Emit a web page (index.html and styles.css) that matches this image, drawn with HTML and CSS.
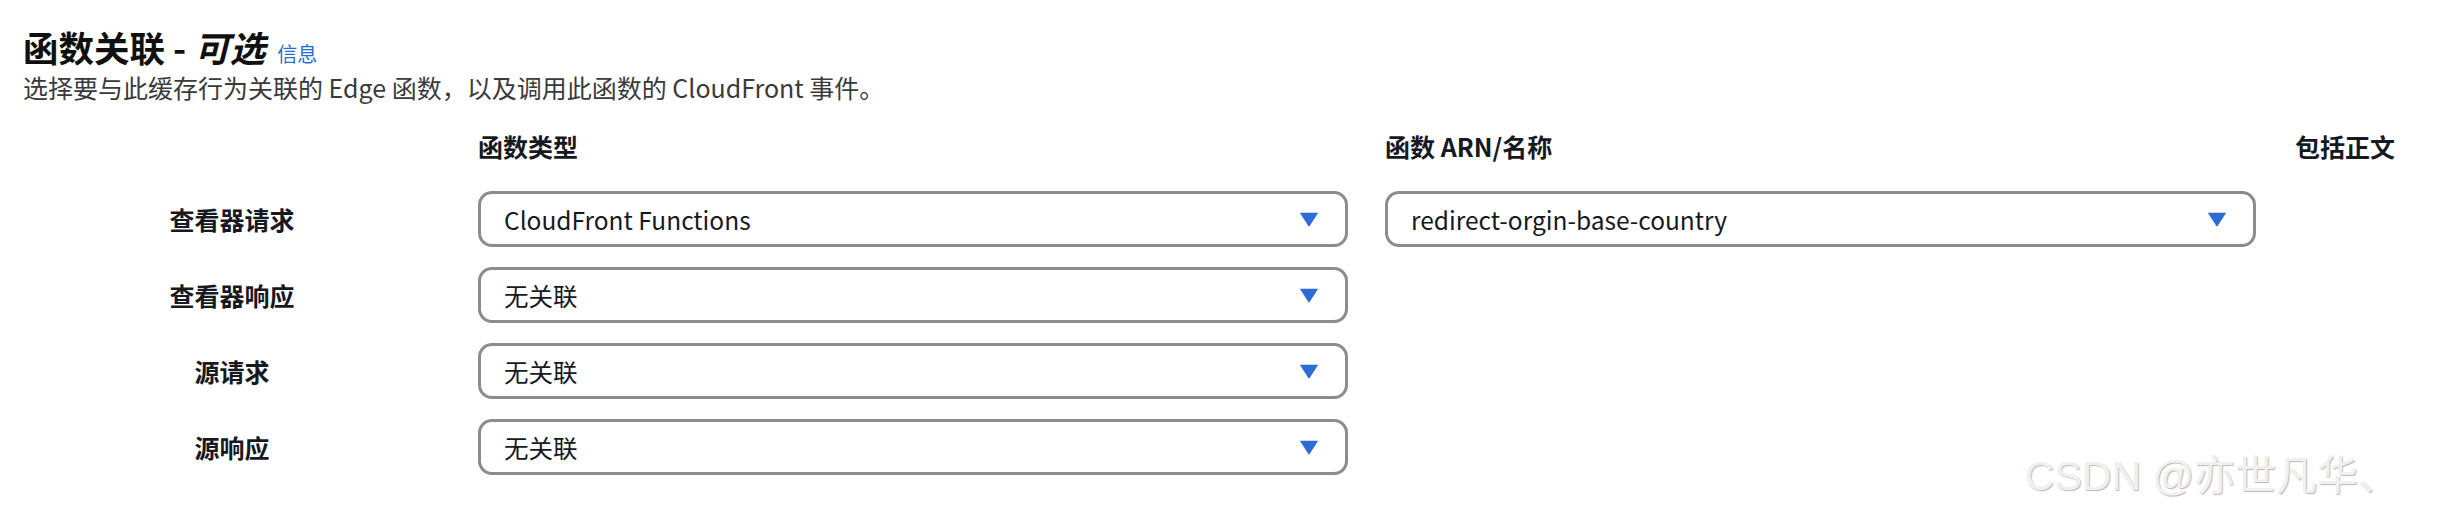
FILE: index.html
```html
<!DOCTYPE html>
<html lang="zh-CN">
<head>
<meta charset="utf-8">
<title>函数关联</title>
<link rel="stylesheet" href="styles.css">
</head>
<body>
<div class="page">
  <header class="head">
    <h2 class="title">函数关联 - <i class="opt">可选</i> <a class="info" href="#">信息</a></h2>
    <p class="desc">选择要与此缓存行为关联的 Edge 函数，以及调用此函数的 CloudFront 事件。</p>
  </header>

  <div class="grid">
    <div class="hcell"></div>
    <div class="hcell">函数类型</div>
    <div class="hcell">函数 ARN/名称</div>
    <div class="hcell hlast">包括正文</div>

    <div class="label">查看器请求</div>
    <div class="select"><span>CloudFront Functions</span><svg class="caret" viewBox="0 0 20 15"><path d="M0.8 0.8 H19.2 L10.8 13.8 Q10 14.9 9.2 13.8 Z" /></svg></div>
    <div class="select"><span>redirect-orgin-base-country</span><svg class="caret" viewBox="0 0 20 15"><path d="M0.8 0.8 H19.2 L10.8 13.8 Q10 14.9 9.2 13.8 Z" /></svg></div>
    <div></div>

    <div class="label">查看器响应</div>
    <div class="select"><span>无关联</span><svg class="caret" viewBox="0 0 20 15"><path d="M0.8 0.8 H19.2 L10.8 13.8 Q10 14.9 9.2 13.8 Z" /></svg></div>
    <div></div>
    <div></div>

    <div class="label">源请求</div>
    <div class="select"><span>无关联</span><svg class="caret" viewBox="0 0 20 15"><path d="M0.8 0.8 H19.2 L10.8 13.8 Q10 14.9 9.2 13.8 Z" /></svg></div>
    <div></div>
    <div></div>

    <div class="label">源响应</div>
    <div class="select"><span>无关联</span><svg class="caret" viewBox="0 0 20 15"><path d="M0.8 0.8 H19.2 L10.8 13.8 Q10 14.9 9.2 13.8 Z" /></svg></div>
    <div></div>
    <div></div>
  </div>

  <div class="watermark">CSDN @亦世凡华、</div>
</div>
</body>
</html>
```

FILE: styles.css
```css
html, body {
  margin: 0;
  padding: 0;
  background: #ffffff;
}

body {
  font-family: "Noto Sans CJK SC", "Noto Sans", sans-serif;
  color: #16191f;
  overflow: hidden;
}

.page {
  position: relative;
  height: 514px;
  box-sizing: border-box;
  padding: 27px 0 0 23px;
}

.head {
  display: flex;
  flex-direction: column;
}

.title {
  margin: 0;
  font-size: 35.5px;
  line-height: 40px;
  font-weight: 700;
  color: #101010;
}

.opt {
  font-style: italic;
}

.info {
  font-size: 20px;
  font-weight: 400;
  color: #1f6fd0;
  text-decoration: none;
  margin-left: 4px;
}

.desc {
  margin: -5px 0 0;
  font-size: 25px;
  line-height: 36px;
  color: #3a3a3a;
}

.grid {
  margin-top: 23px;
  display: grid;
  grid-template-columns: 418px 870px 871px auto;
  column-gap: 37px;
  row-gap: 20px;
  align-items: center;
}

.hcell {
  font-size: 25px;
  line-height: 36px;
  font-weight: 700;
  padding-bottom: 7px;
  color: #16191f;
}

.hlast {
  padding-left: 2px;
}

.label {
  text-align: center;
  font-size: 25px;
  font-weight: 700;
  line-height: 36px;
  color: #16191f;
}

.select {
  height: 56px;
  box-sizing: border-box;
  border: 3px solid #8c8c8c;
  border-radius: 14px;
  display: flex;
  align-items: center;
  justify-content: space-between;
  padding: 0 26px 0 23px;
  font-size: 24.5px;
  color: #16191f;
}

.caret {
  width: 20px;
  height: 15px;
  fill: #2c6ad6;
  flex: none;
}

.watermark {
  position: absolute;
  right: 43px;
  top: 446px;
  font-family: "Liberation Sans", "Noto Sans CJK SC", sans-serif;
  font-size: 41px;
  line-height: 60px;
  color: #f0f0f0;
  text-shadow: 1px 1px 1px #b8b8b8;
  white-space: nowrap;
}
```
